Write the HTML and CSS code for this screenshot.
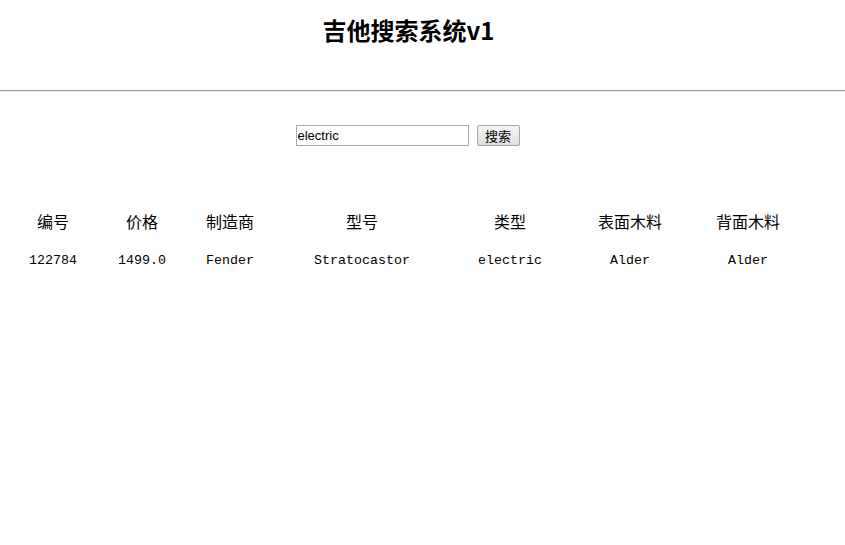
FILE: index.html
```html
<!DOCTYPE html>
<html lang="zh">
<head>
<meta charset="utf-8">
<title>吉他搜索系统v1</title>
<link rel="stylesheet" href="styles.css">
</head>
<body>
<header class="top">
  <h1 class="title">吉他搜索系统v1</h1>
</header>
<hr class="rule">
<form class="search">
  <input class="search-input" type="text" value="electric">
  <button class="search-btn" type="button">搜索</button>
</form>
<table class="results">
  <colgroup>
    <col class="c1"><col class="c2"><col class="c3"><col class="c4"><col class="c5"><col class="c6"><col class="c7">
  </colgroup>
  <thead>
    <tr><th>编号</th><th>价格</th><th>制造商</th><th>型号</th><th>类型</th><th>表面木料</th><th>背面木料</th></tr>
  </thead>
  <tbody>
    <tr><td>122784</td><td>1499.0</td><td>Fender</td><td>Stratocastor</td><td>electric</td><td>Alder</td><td>Alder</td></tr>
  </tbody>
</table>
</body>
</html>
```
FILE: styles.css
```css
html, body {
  margin: 0;
  padding: 0;
  background: #fff;
  color: #000;
}
body {
  font-family: "Noto Sans CJK SC", "Liberation Sans", sans-serif;
}
.top {
  width: 817px;
  padding-top: 13px;
  height: 76px;
  box-sizing: border-box;
  text-align: center;
}
.title {
  margin: 0;
  font-size: 24px;
  line-height: 34px;
  font-weight: bold;
  font-family: "Noto Sans CJK SC", serif;
}
.rule {
  margin: 14px 0 0 0;
  border: 0;
  border-top: 1px solid #9a9a9a;
  border-bottom: 1px solid #e6e6e6;
  height: 0;
}
.search {
  width: 815px;
  margin: 33px 0 0 0;
  display: flex;
  justify-content: center;
  align-items: center;
  gap: 8px;
}
.search-input {
  width: 173px;
  height: 21px;
  box-sizing: border-box;
  border: 1px solid #a9a9a9;
  padding: 0 1px;
  font-family: "Liberation Sans", sans-serif;
  font-size: 13px;
  margin: 0;
}
.search-btn {
  width: 43px;
  height: 21px;
  box-sizing: border-box;
  border: 1px solid #a6a6a6;
  border-radius: 2px;
  background: linear-gradient(#f6f6f6, #dedede);
  font-family: "Noto Sans CJK SC", sans-serif;
  font-size: 13px;
  line-height: 17px;
  padding: 0;
  margin: 0;
  color: #000;
}
.results {
  margin: 62px 0 0 8px;
  border-collapse: collapse;
  table-layout: fixed;
  width: 798px;
}
.c1 { width: 90px; }
.c2 { width: 88px; }
.c3 { width: 88px; }
.c4 { width: 176px; }
.c5 { width: 120px; }
.c6 { width: 120px; }
.c7 { width: 116px; }
.results th {
  font-weight: normal;
  font-size: 16px;
  line-height: 22px;
  padding: 0;
  height: 26px;
  text-align: center;
  font-family: "Noto Sans CJK SC", sans-serif;
}
.results td {
  font-family: "Liberation Mono", monospace;
  font-size: 13.3px;
  line-height: 16px;
  padding: 19px 0 0 0;
  text-align: center;
}
```
